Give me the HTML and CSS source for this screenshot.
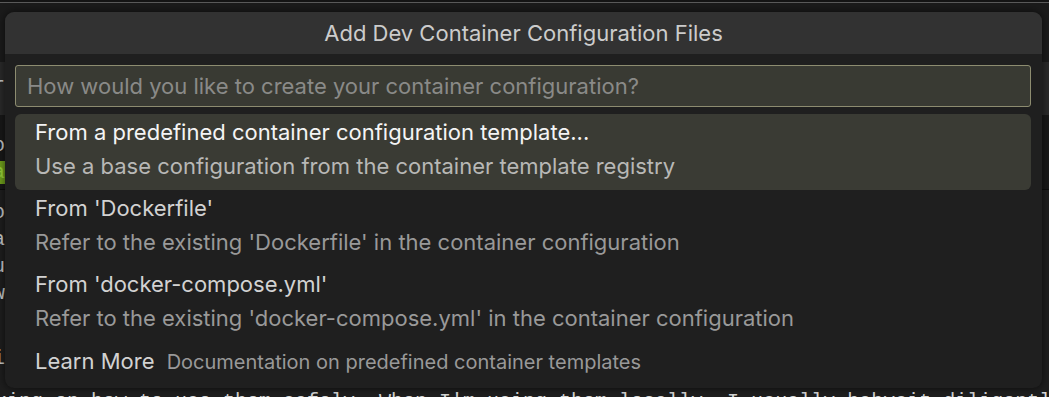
FILE: index.html
```html
<!DOCTYPE html>
<html lang="en">
<head>
    <meta charset="UTF-8">
    <meta name="viewport" content="width=device-width, initial-scale=1.0">
    <title>Add Dev Container Configuration Files</title>
    <link rel="stylesheet" href="styles.css">
</head>
<body>
<!-- editor behind the quick pick -->
<div class="editor">
    <div class="tab-strip"></div>
    <div class="pane pane-head"></div>
    <div class="pane pane-term">
        <div class="code-line">r-container/devcontainer.json in your project folder to get started quickly.</div>
    </div>
    <div class="pane pane-out">
        <div class="code-line">o see the output of the configuration step and the build log for the image.</div>
        <div class="code-line"><span class="hit">a</span>dd a devcontainer configuration and rebuild when you're ready to try it.</div>
    </div>
    <div class="pane pane-doc">
        <div class="code-line">o run agents inside a container is a nice way to keep them away from the</div>
        <div class="code-line">a lot of people are still quite careful about letting these tools run wild.</div>
        <div class="code-line">u can give them a sandbox and let them go off and work for a while on their 'e</div>
        <div class="code-line">w I have been doing this for a few weeks and here is how I set things up.</div>
        <div class="code-line gap">i</div>
        <div class="code-line tail">king on how to use them safely. When I'm using them locally, I usually babysit diligently</div>
    </div>
</div>

<div class="dialog">
    <div class="dialog-title">Add Dev Container Configuration Files</div>
    <div class="dialog-body">
        <input class="search" type="text" placeholder="How would you like to create your container configuration?">
        <ul class="options">
            <li class="option active">
                <div class="label">From a predefined container configuration template...</div>
                <div class="detail">Use a base configuration from the container template registry</div>
            </li>
            <li class="option">
                <div class="label">From 'Dockerfile'</div>
                <div class="detail">Refer to the existing 'Dockerfile' in the container configuration</div>
            </li>
            <li class="option">
                <div class="label">From 'docker-compose.yml'</div>
                <div class="detail">Refer to the existing 'docker-compose.yml' in the container configuration</div>
            </li>
            <li class="option inline">
                <span class="label">Learn More</span>
                <span class="detail">Documentation on predefined container templates</span>
            </li>
        </ul>
    </div>
</div>
</body>
</html>
```

FILE: styles.css
```css
body {
    margin: 0;
    padding: 0;
    background-color: #1e1e1e;
    font-family: Inter, "Noto Sans", sans-serif;
    overflow: hidden;
    height: 397px;
}

/* editor underneath */
.editor {
    font-family: "Liberation Mono", monospace;
    font-size: 20px;
    color: #c8c8c8;
}

.tab-strip {
    height: 2px;
    background-color: #141414;
    border-bottom: 1px solid #5a5a5a;
}

.pane-head {
    height: 59px;
    background-color: #1b1b1b;
}

.pane-term {
    height: 53px;
    background-color: #2a2a2a;
    padding-top: 10px;
    box-sizing: border-box;
}

.pane-out {
    height: 75px;
    background-color: #181818;
    padding-top: 17px;
    box-sizing: border-box;
    border-bottom: 1px solid #0d0d0d;
}

.pane-doc {
    padding-top: 9px;
}

.code-line {
    margin-left: -7px;
    line-height: 27px;
    white-space: pre;
}

.code-line.gap {
    margin-top: 38px;
}

.code-line.tail {
    margin-top: 16px;
    margin-left: -5px;
    color: #d8d8d8;
}

.hit {
    background-color: #6f9f1c;
    color: #9bd33a;
}

/* quick pick */
.dialog {
    position: absolute;
    top: 12px;
    left: 5px;
    width: 1037px;
    height: 376px;
    background-color: #1f1f1f;
    border-radius: 9px;
    overflow: hidden;
    box-shadow: 0 0 8px rgba(0, 0, 0, 0.6);
}

.dialog-title {
    height: 42px;
    line-height: 42px;
    background-color: #323232;
    color: #cccccc;
    text-align: center;
    font-size: 22px;
}

.dialog-body {
    padding: 11px 11px 0 10px;
}

.search {
    display: block;
    width: 100%;
    height: 42px;
    box-sizing: border-box;
    margin: 0;
    padding: 0 11px;
    background-color: #393a33;
    border: 1px solid #8d8c70;
    border-radius: 3px;
    color: #d0d0d0;
    font-family: inherit;
    font-size: 22px;
    outline: none;
}

.search::placeholder {
    color: #8a8a88;
}

.options {
    list-style: none;
    margin: 7px 0 0 0;
    padding: 0;
}

.option {
    padding: 1px 20px 7px 20px;
    border-radius: 6px;
    font-size: 22px;
    line-height: 34px;
    white-space: nowrap;
}

.option .label {
    color: #d2d2d2;
}

.option .detail {
    color: #999999;
}

.option.active {
    background-color: #3a3b34;
}

.option.active .label {
    color: #f4f4f4;
}

.option.active .detail {
    color: #b8b8b6;
}

.option.inline {
    padding-top: 2px;
}

.option.inline .detail {
    font-size: 20px;
    margin-left: 6px;
}
```
